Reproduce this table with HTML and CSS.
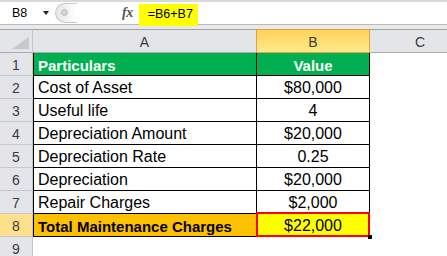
FILE: index.html
```html
<!DOCTYPE html>
<html>
<head>
<meta charset="utf-8">
<link rel="stylesheet" href="styles.css">
</head>
<body>
<div class="app">
  <div class="topstrip"></div>
  <div class="fbar">
    <div class="namebox"><span class="nb-text">B8</span><span class="caret"></span></div>
    <div class="splitter"><span class="dot"></span></div>
    <div class="fx">fx</div>
    <div class="formula">=B6+B7</div>
  </div>
  <div class="gap"></div>
  <div class="sheet">
    <div class="corner"><svg width="17" height="12" viewBox="0 0 17 12"><polygon points="17,0 17,12 0,12" fill="#c7c9cc"/></svg></div>
    <div class="colhead colhead-a">A</div>
    <div class="colhead colhead-b">B</div>
    <div class="colhead colhead-c">C</div>

    <div class="rowhead">1</div>
    <div class="cell cell-a green">Particulars</div>
    <div class="cell cell-b green center">Value</div>
    <div class="cell-c"></div>

    <div class="rowhead">2</div>
    <div class="cell cell-a">Cost of Asset</div>
    <div class="cell cell-b center">$80,000</div>
    <div class="cell-c"></div>

    <div class="rowhead">3</div>
    <div class="cell cell-a">Useful life</div>
    <div class="cell cell-b center">4</div>
    <div class="cell-c"></div>

    <div class="rowhead">4</div>
    <div class="cell cell-a">Depreciation Amount</div>
    <div class="cell cell-b center">$20,000</div>
    <div class="cell-c"></div>

    <div class="rowhead">5</div>
    <div class="cell cell-a">Depreciation Rate</div>
    <div class="cell cell-b center">0.25</div>
    <div class="cell-c"></div>

    <div class="rowhead">6</div>
    <div class="cell cell-a">Depreciation</div>
    <div class="cell cell-b center">$20,000</div>
    <div class="cell-c"></div>

    <div class="rowhead">7</div>
    <div class="cell cell-a">Repair Charges</div>
    <div class="cell cell-b center">$2,000</div>
    <div class="cell-c"></div>

    <div class="rowhead rowhead-sel">8</div>
    <div class="cell cell-a orange">Total Maintenance Charges</div>
    <div class="cell cell-b center yellow">$22,000<span class="sel"></span><span class="handle"></span></div>
    <div class="cell-c"></div>

    <div class="rowhead">9</div>
    <div class="blank"></div>
    <div class="blank"></div>
    <div class="blank"></div>
  </div>
</div>
</body>
</html>
```

FILE: styles.css
```css
html, body {
  margin: 0;
  padding: 0;
  background: #ffffff;
  overflow: hidden;
}

.app {
  width: 447px;
  height: 256px;
  overflow: hidden;
  font-family: "Liberation Sans", Arial, sans-serif;
  color: #000;
}

.topstrip {
  height: 2px;
  background: #d8d8d8;
}

.fbar {
  height: 22px;
  background: #ffffff;
  border-bottom: 1px solid #b9b9b9;
  display: flex;
  align-items: center;
  font-size: 12.5px;
}

.namebox {
  width: 55px;
  box-sizing: border-box;
  padding-left: 12px;
  display: flex;
  align-items: center;
}

.caret {
  margin-left: 16px;
  width: 0;
  height: 0;
  border-left: 3.5px solid transparent;
  border-right: 3.5px solid transparent;
  border-top: 4px solid #222;
}

.splitter {
  width: 22px;
  height: 20px;
  box-sizing: border-box;
  border: 1px solid #c6c6c6;
  border-right: none;
  border-radius: 11px 0 0 11px;
  background: linear-gradient(90deg, #e4e4e4, #ffffff 95%);
  display: flex;
  align-items: center;
  padding-left: 5px;
}

.dot {
  width: 7px;
  height: 7px;
  border-radius: 50%;
  background: #d2d2d2;
  border: 1px solid #c0c0c0;
  box-sizing: border-box;
  margin-top: -1px;
}

.fx {
  margin-left: 45px;
  font-family: "Liberation Serif", "Times New Roman", serif;
  font-style: italic;
  font-weight: bold;
  font-size: 14px;
  color: #555;
  letter-spacing: -0.5px;
}

.formula {
  align-self: flex-start;
  margin-top: 2px;
  margin-left: 6px;
  height: 22px;
  width: 59px;
  box-sizing: border-box;
  padding-left: 9px;
  background: #ffff00;
  line-height: 21px;
}

.gap {
  height: 4px;
  background: #e9eaeb;
}

.sheet {
  display: grid;
  grid-template-columns: 33px 224px 113px 100px;
  grid-template-rows: 24px;
  grid-auto-rows: 23px;
  font-size: 16px;
}

.corner {
  background: #e3e5e8;
  border-top: 1px solid #9fa2a7;
  border-bottom: 1px solid #a8abb0;
  border-right: 1px solid #c3c6ca;
  box-sizing: border-box;
  display: flex;
  align-items: flex-end;
  justify-content: flex-end;
  padding: 0 3px 3px 0;
}

.colhead {
  background: #e3e5e8;
  border-top: 1px solid #9fa2a7;
  border-bottom: 1px solid #a8abb0;
  box-sizing: border-box;
  display: flex;
  align-items: center;
  justify-content: center;
  font-size: 14px;
  color: #3b3b3b;
  padding-top: 1px;
}

.colhead-a {
  border-right: 1px solid #e0a340;
}

.colhead-b {
  background: linear-gradient(180deg, #ffd35a, #ffe98c);
  border-top-color: #e0a340;
  border-bottom-color: #e0a340;
  border-right: 1px solid #e0a340;
}

.rowhead {
  background: #e3e5e8;
  border-bottom: 1px solid #c6c8cc;
  border-right: 1px solid #c3c6ca;
  box-sizing: border-box;
  display: flex;
  align-items: center;
  justify-content: center;
  font-size: 14px;
  color: #3b3b3b;
  padding-top: 1px;
}

.rowhead-sel {
  background: #ffe08c;
}

.cell {
  box-sizing: border-box;
  border-bottom: 1px solid #000;
  border-right: 1px solid #000;
  display: flex;
  align-items: center;
  padding-top: 2px;
  white-space: nowrap;
  overflow: hidden;
}

.cell-a {
  border-left: 1px solid #000;
  padding-left: 4px;
}

.center {
  justify-content: center;
}

.green {
  background: #00b050;
  color: #ffffff;
  font-weight: bold;
  font-size: 15px;
}

.orange {
  background: #ffc000;
  font-weight: bold;
  font-size: 15px;
}

.yellow {
  background: #ffff00;
  position: relative;
  overflow: visible;
}

.sel {
  position: absolute;
  left: -1px;
  top: -2px;
  right: -1px;
  bottom: -1px;
  border: 2.5px solid #ff0000;
  box-sizing: border-box;
}

.handle {
  position: absolute;
  right: -3px;
  bottom: -3px;
  width: 4px;
  height: 4px;
  background: #000;
}

.cell-c, .blank {
  background: #ffffff;
}
```
